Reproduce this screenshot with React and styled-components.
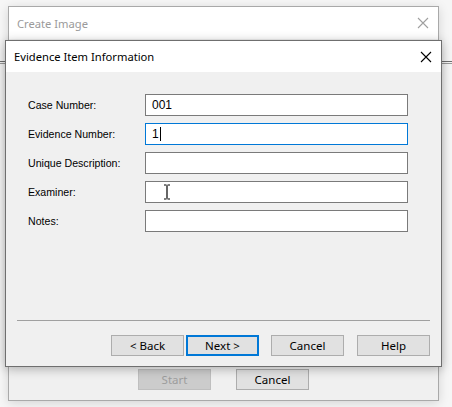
import React from 'react';
import styled, { createGlobalStyle } from 'styled-components';

const GlobalStyle = createGlobalStyle`
  body {
    margin: 0;
    background: #f6f6f6;
    font-family: "Noto Sans", "Liberation Sans", sans-serif;
  }
`;

const Desktop = styled.div`
  position: relative;
  width: 452px;
  height: 407px;
  overflow: hidden;
`;

const Rule = styled.div`
  position: absolute;
  left: 0;
  right: 0;
  top: 61px;
  height: 1px;
  border-top: 1px solid #6e6e6e;
  border-bottom: 1px solid #9a9a9a;
`;

const Window = styled.div`
  position: absolute;
  left: ${p => p.x}px;
  top: ${p => p.y}px;
  width: ${p => p.w}px;
  height: ${p => p.h}px;
  box-sizing: border-box;
  display: flex;
  flex-direction: column;
  background: #f0f0f0;
  border: 1px solid ${p => (p.active ? '#6f6f6f' : '#a9a9a9')};
  box-shadow: 0 2px 10px rgba(0, 0, 0, ${p => (p.active ? 0.28 : 0.14)});
`;

const TitleBar = styled.div`
  height: ${p => p.h}px;
  flex: none;
  display: flex;
  align-items: center;
  justify-content: space-between;
  padding: 0 9px 0 8px;
  background: #fff;
  font-size: 11.2px;
  color: ${p => (p.dim ? '#9a9a9a' : '#000')};
`;

const CloseIcon = ({ color }) => (
  <svg width="12" height="12" viewBox="0 0 12 12">
    <path d="M1 1L11 11M11 1L1 11" stroke={color} strokeWidth="1.1" fill="none" />
  </svg>
);

const Body = styled.div`
  flex: 1;
  display: flex;
  flex-direction: column;
  padding: 22px 11px 10px 11px;
`;

const Form = styled.div`
  display: grid;
  grid-template-columns: 117px 263px;
  row-gap: 7px;
  padding-left: 11px;
`;

const Label = styled.div`
  height: 22px;
  display: flex;
  align-items: center;
  font-family: "Liberation Sans", Arial, sans-serif;
  font-size: 10.6px;
  color: #000;
`;

const Field = styled.div`
  position: relative;
  height: 22px;
  box-sizing: border-box;
  display: flex;
  align-items: center;
  padding-left: 6px;
  background: #fff;
  border: 1px solid ${p => (p.focused ? '#0078d7' : '#7a7a7a')};
  font-family: "Liberation Sans", Arial, sans-serif;
  font-size: 12px;
  color: #000;
`;

const Caret = styled.span`
  display: inline-block;
  width: 1px;
  height: 14px;
  margin-left: 1px;
  background: #000;
`;

const Cursor = styled.svg`
  position: absolute;
  left: 17px;
  top: 2px;
`;

const Spacer = styled.div`
  flex: 1;
`;

const Separator = styled.div`
  height: 1px;
  background: #a0a0a0;
  margin: 0 0 14px 0;
`;

const ButtonRow = styled.div`
  display: flex;
  justify-content: flex-end;
`;

const Button = styled.div`
  width: 73px;
  height: 21px;
  box-sizing: border-box;
  display: flex;
  align-items: center;
  justify-content: center;
  font-size: 11.5px;
  color: ${p => (p.disabled ? '#9d9d9d' : '#000')};
  background: ${p => (p.disabled ? '#cccccc' : '#e1e1e1')};
  border: ${p => (p.primary ? '2px solid #0078d7' : `1px solid ${p.disabled ? '#bfbfbf' : '#adadad'}`)};
  margin-right: ${p => p.after || 0}px;
`;

const BackBody = styled.div`
  flex: 1;
  display: flex;
  flex-direction: column;
  justify-content: flex-end;
  padding-bottom: 10px;
`;

const BackButtons = styled.div`
  display: flex;
  gap: 25px;
  padding-left: 129px;
`;

const fields = [
  { label: 'Case Number:', value: '001' },
  { label: 'Evidence Number:', value: '1', focused: true },
  { label: 'Unique Description:' },
  { label: 'Examiner:', cursor: true },
  { label: 'Notes:' },
];

const App = () => (
  <Desktop>
    <GlobalStyle />
    <Rule />
    <Window x={8} y={6} w={431} h={395}>
      <TitleBar h={32} dim>
        Create Image
        <CloseIcon color="#a0a0a0" />
      </TitleBar>
      <BackBody>
        <BackButtons>
          <Button disabled>Start</Button>
          <Button>Cancel</Button>
        </BackButtons>
      </BackBody>
    </Window>
    <Window active x={5} y={40} w={437} h={327}>
      <TitleBar h={31}>
        Evidence Item Information
        <CloseIcon color="#000" />
      </TitleBar>
      <Body>
        <Form>
          {fields.map(f => (
            <React.Fragment key={f.label}>
              <Label>{f.label}</Label>
              <Field focused={f.focused}>
                {f.value}
                {f.focused && <Caret />}
                {f.cursor && (
                  <Cursor width="8" height="16" viewBox="0 0 8 16">
                    <path d="M1 1H3.5M4.5 1H7M4 1.5V14.5M1 15H3.5M4.5 15H7" stroke="#000" strokeWidth="1.2" fill="none" />
                  </Cursor>
                )}
              </Field>
            </React.Fragment>
          ))}
        </Form>
        <Spacer />
        <Separator />
        <ButtonRow>
          <Button after={2}>&lt; Back</Button>
          <Button primary after={12}>Next &gt;</Button>
          <Button after={13}>Cancel</Button>
          <Button>Help</Button>
        </ButtonRow>
      </Body>
    </Window>
  </Desktop>
);

export default App;
